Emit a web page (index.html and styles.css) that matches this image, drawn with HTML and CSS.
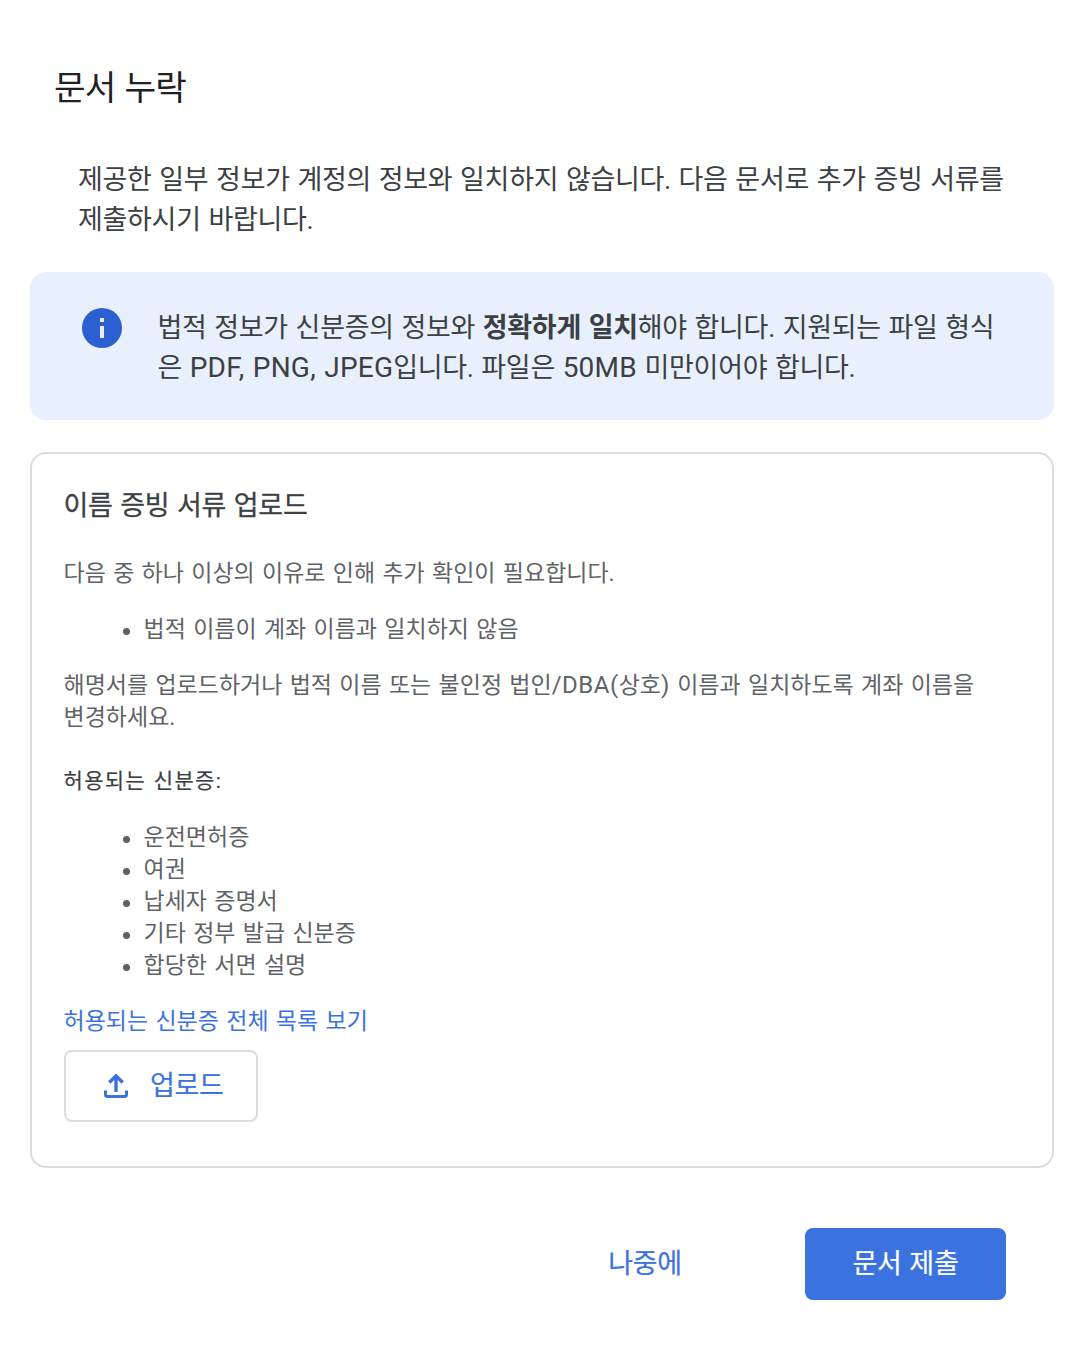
FILE: index.html
```html
<!DOCTYPE html>
<html lang="ko">
<head>
<meta charset="utf-8">
<title>문서 누락</title>
<link rel="stylesheet" href="styles.css">
</head>
<body>
<main class="dialog">
  <h1 class="title">문서 누락</h1>
  <p class="intro">제공한 일부 정보가 계정의 정보와 일치하지 않습니다. 다음 문서로 추가 증빙 서류를<br>제출하시기 바랍니다.</p>
  <section class="notice">
    <svg class="info" viewBox="0 0 40 40"><circle cx="20" cy="20" r="20" fill="#2c5fd0"/><path d="M18 10h4v4h-4zM18 18h4v12h-4z" fill="#e8effd"/></svg>
    <p>법적 정보가 신분증의 정보와 <b>정확하게 일치</b>해야 합니다. 지원되는 파일 형식<br>은 <span class="latin">PDF, PNG, JPEG</span>입니다. 파일은 <span class="latin">50MB</span> 미만이어야 합니다.</p>
  </section>
  <section class="card">
    <h2 class="card-title">이름 증빙 서류 업로드</h2>
    <p class="reason">다음 중 하나 이상의 이유로 인해 추가 확인이 필요합니다.</p>
    <ul class="list"><li>법적 이름이 계좌 이름과 일치하지 않음</li></ul>
    <p class="explain">해명서를 업로드하거나 법적 이름 또는 불인정 법인<span class="latin-small">/DBA(</span>상호<span class="latin-small">)</span> 이름과 일치하도록 계좌 이름을<br>변경하세요.</p>
    <h3 class="accepted">허용되는 신분증:</h3>
    <ul class="list"><li>운전면허증</li><li>여권</li><li>납세자 증명서</li><li>기타 정부 발급 신분증</li><li>합당한 서면 설명</li></ul>
    <a class="link">허용되는 신분증 전체 목록 보기</a>
    <button class="upload"><svg viewBox="0 0 24 24" width="24" height="24" fill="none" stroke="#3b72e0" stroke-width="3"><path d="M1.500 16.500V20.500Q1.500 22.500 3.500 22.500H20.500Q22.500 22.500 22.500 20.500V16.500"/><path stroke-width="3.400" d="M12 18V2M5.300 8.500L12 1.900L18.700 8.500"/></svg><span>업로드</span></button>
  </section>
  <footer class="actions"><button class="later">나중에</button><button class="submit">문서 제출</button></footer>
</main>
</body>
</html>
```
FILE: styles.css
```css
* { box-sizing: border-box; }
body { margin: 0; background: #fff; font-family: Roboto, "Noto Sans CJK KR", sans-serif; color: #3c4043; }
h1, h2, h3, p, ul { margin: 0; padding: 0; font-weight: 400; }
button { font: inherit; letter-spacing: inherit; word-spacing: inherit; padding: 0; border: 0; background: none; }
.dialog { width: 1082px; height: 1360px; padding: 64px 28px 0 30px; white-space: nowrap; font-size: 27px; letter-spacing: -.3px; word-spacing: 1.3px; }
.title { padding-left: 24px; font-size: 34.3px; line-height: 48px; color: #202124; letter-spacing: -.8px; }
.intro { margin: 48px 0 0 48px; line-height: 40px; }
.notice { margin-top: 32px; height: 148px; border-radius: 16px; background: #e8effd; padding: 36px 52px; display: flex; gap: 35.5px; line-height: 40px; }
.info { flex: none; width: 40px; height: 40px; }
.notice b { font-weight: 700; }
.latin { font-size: 28px; letter-spacing: .2px; line-height: 1; }
.latin-small { font-size: 24px; letter-spacing: .5px; line-height: 1; }
.card { margin-top: 32px; height: 716px; border: 2px solid #dadce0; border-radius: 16px; padding: 32px 32px 0 31.5px; font-size: 23px; line-height: 32px; color: #5f6368; letter-spacing: 0; word-spacing: 1.6px; }
.card-title { font-size: 27px; line-height: 40px; color: #3c4043; letter-spacing: -.3px; word-spacing: 1.3px; -webkit-text-stroke: .3px; }
.reason { margin-top: 32px; }
.list { margin: 24px 0; padding-left: 80px; list-style: none; }
.list li { display: flex; }
.list li::before { content: ""; width: 7px; height: 7px; margin: 14px 14px 0 -21px; border-radius: 50%; background: #5f6368; }
.accepted { margin: 31px 0 25px; font-size: 21px; color: #3c4043; letter-spacing: 1.35px; word-spacing: 1px; -webkit-text-stroke: .2px; }
.link { display: block; color: #3b72e0; }
.upload { margin: 12px 0 0 .5px; width: 194px; height: 72px; border: 2px solid #dadce0; border-radius: 8px; display: flex; align-items: center; padding-left: 38px; gap: 22px; color: #3b72e0; font-size: 27px; letter-spacing: -.3px; -webkit-text-stroke: .2px; }
.actions { margin-top: 60px; padding-right: 48px; display: flex; justify-content: flex-end; gap: 76px; }
.later, .submit { height: 72px; padding-bottom: 6px; color: #3b72e0; -webkit-text-stroke: .2px; }
.later { width: 168px; }
.submit { width: 201px; border-radius: 8px; background: #3b72e0; color: #fff; }
```
